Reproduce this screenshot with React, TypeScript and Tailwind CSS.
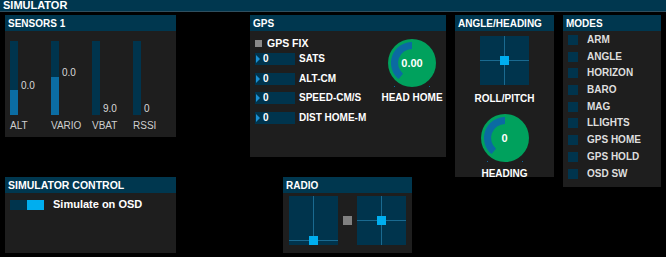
import React from 'react';

const font = { fontFamily: '"Liberation Sans", Arial, sans-serif' };

function Panel({
  title,
  className,
  titleClass,
  bodyClass,
  children,
}: {
  title: string;
  className: string;
  titleClass?: string;
  bodyClass?: string;
  children?: React.ReactNode;
}) {
  return (
    <div className={`flex flex-col bg-[#1e1e1e] ${className}`}>
      <div
        className={`h-[16px] shrink-0 whitespace-nowrap bg-[#00374f] pl-[3px] font-bold leading-[17px] text-white ${titleClass ?? 'text-[10px]'}`}
      >
        {title}
      </div>
      <div className={`relative flex-1 whitespace-nowrap ${bodyClass ?? ''}`}>{children}</div>
    </div>
  );
}

function SensorBar({ label, value, fill }: { label: string; value: string; fill: number }) {
  return (
    <div className="relative w-[41px] shrink-0">
      <div className="relative h-[74px] w-[8px] bg-[#00344d]">
        <div className="absolute bottom-0 left-0 w-full bg-[#0b6da3]" style={{ height: fill }} />
        <span
          className="absolute left-[11px] text-[10px] leading-none text-[#d8d8d8]"
          style={{ bottom: fill > 0 ? fill - 1 : 1 }}
        >
          {value}
        </span>
      </div>
      <div className="mt-[6px] text-[10px] leading-none text-[#cfcfcf]">{label}</div>
    </div>
  );
}

function Gauge({ value }: { value: string }) {
  return (
    <div className="relative h-[50px] w-[50px] shrink-0">
      <svg width="50" height="50" viewBox="0 0 50 50" className="absolute inset-0">
        <circle cx="25" cy="25" r="24" fill="#00a15d" />
        <path d="M25 4 A21 21 0 0 0 11.5 41.1 L16 35.7 A14 14 0 0 1 25 11 Z" fill="#0b6aa2" />
        <rect x="7" y="48" width="1" height="1" fill="#0b6aa2" />
        <rect x="42" y="48" width="1" height="1" fill="#0b6aa2" />
      </svg>
      <div className="absolute inset-0 flex items-center justify-center text-[11px] font-bold text-white">
        {value}
      </div>
    </div>
  );
}

function Stick({ x, y }: { x: number; y: number }) {
  return (
    <div className="relative h-[49px] w-[49px] shrink-0 bg-[#00344d]">
      <div className="absolute top-0 h-full w-px bg-[#1a6a90]" style={{ left: x }} />
      <div className="absolute left-0 h-px w-full bg-[#1a6a90]" style={{ top: y }} />
      <div className="absolute h-[9px] w-[9px] bg-[#00aeef]" style={{ left: x - 4, top: y - 4 }} />
    </div>
  );
}

const gpsRows = ['SATS', 'ALT-CM', 'SPEED-CM/S', 'DIST HOME-M'];
const modes = ['ARM', 'ANGLE', 'HORIZON', 'BARO', 'MAG', 'LLIGHTS', 'GPS HOME', 'GPS HOLD', 'OSD SW'];

export default function App() {
  return (
    <div className="h-[257px] w-[666px] overflow-hidden bg-black" style={font}>
      <div className="h-[12px] border-b border-[#2f4f5f] bg-[#00374f] pl-[3px] text-[11px] font-bold leading-[11px] text-white">
        SIMULATOR
      </div>

      <div className="mt-[3px] flex items-start">
        {/* column 1 */}
        <div className="ml-[5px] flex shrink-0 flex-col">
          <Panel title="SENSORS 1" className="h-[122px] w-[171px]" bodyClass="flex pl-[5px] pt-[10px]">
            <SensorBar label="ALT" value="0.0" fill={25} />
            <SensorBar label="VARIO" value="0.0" fill={38} />
            <SensorBar label="VBAT" value="9.0" fill={0} />
            <SensorBar label="RSSI" value="0" fill={0} />
          </Panel>
          <Panel
            title="SIMULATOR CONTROL"
            titleClass="text-[10.5px]"
            className="mt-[40px] h-[76px] w-[171px]"
            bodyClass="pl-[5px] pt-[6px]"
          >
            <div className="flex items-center">
              <div className="flex h-[10px] w-[34px]">
                <div className="w-[17px] bg-[#00344d]" />
                <div className="w-[17px] bg-[#00aeef]" />
              </div>
              <span className="ml-[9px] text-[11px] font-bold leading-none text-white">Simulate on OSD</span>
            </div>
          </Panel>
        </div>

        {/* column 2 */}
        <div className="ml-[74px] flex shrink-0 flex-col">
          <Panel title="GPS" className="h-[142px] w-[196px]" bodyClass="flex pt-[7px]">
            <div className="flex w-[132px] shrink-0 flex-col pl-[5px]">
              <div className="flex h-[10px] items-center">
                <div className="h-[7px] w-[7px] bg-[#8a8a8a]" />
                <span className="ml-[5px] text-[10.5px] font-bold leading-none text-white">GPS FIX</span>
              </div>
              <div className="mt-[5px] flex flex-col gap-[7.5px]">
                {gpsRows.map((r) => (
                  <div key={r} className="flex items-center">
                    <div className="relative flex h-[12px] w-[40px] items-center bg-[#00344d]">
                      <div className="ml-px h-0 w-0 border-y-[4px] border-l-[4px] border-y-transparent border-l-[#1b8fd2]" />
                      <span className="ml-[3px] text-[10px] font-bold leading-none text-white">0</span>
                    </div>
                    <span className="ml-[4px] text-[10px] font-bold leading-none text-white">{r}</span>
                  </div>
                ))}
              </div>
            </div>
            <div className="flex w-[60px] shrink-0 flex-col items-center">
              <Gauge value="0.00" />
              <span className="mt-[5px] text-[10px] font-bold leading-none text-white">HEAD HOME</span>
            </div>
          </Panel>
          <Panel title="RADIO" className="ml-[33px] mt-[20px] h-[76px] w-[129px]" bodyClass="flex items-center pl-[6px] pb-[5px]">
            <Stick x={24} y={44} />
            <div className="mx-[5px] h-[9px] w-[9px] bg-[#808080]" />
            <Stick x={24} y={24} />
          </Panel>
        </div>

        {/* column 3 */}
        <Panel title="ANGLE/HEADING" className="ml-[9px] h-[162px] w-[99px] shrink-0" bodyClass="flex flex-col items-center pt-[5px]">
          <Stick x={24} y={24} />
          <span className="mt-[9px] text-[10px] font-bold leading-none text-white">ROLL/PITCH</span>
          <div className="mt-[9px]">
            <Gauge value="0" />
          </div>
          <span className="mt-[6px] text-[10px] font-bold leading-none text-white">HEADING</span>
        </Panel>

        {/* column 4 */}
        <Panel title="MODES" className="ml-[9px] h-[172px] w-[98px] shrink-0" bodyClass="pl-[5px] pt-[4px]">
          {modes.map((m) => (
            <div key={m} className="flex h-[16.7px] items-start">
              <div className="h-[10px] w-[10px] bg-[#00344d]" />
              <span className="ml-[9px] text-[10px] font-bold leading-[10px] text-[#dedede]">{m}</span>
            </div>
          ))}
        </Panel>
      </div>
    </div>
  );
}
